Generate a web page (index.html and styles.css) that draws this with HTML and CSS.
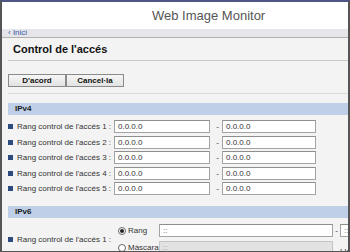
FILE: index.html
```html
<!DOCTYPE html>
<html lang="ca">
<head>
<meta charset="utf-8">
<title>Control de l'accés</title>
<link rel="stylesheet" href="styles.css">
</head>
<body>
<div class="window">
  <header class="top">Web Image Monitor</header>
  <nav class="crumb"><a class="crumb-link" href="#">&lsaquo; Inici</a></nav>
  <main class="content">
    <h1 class="title">Control de l'accés</h1>
    <div class="actions">
      <button class="btn" type="button">D'acord</button>
      <button class="btn" type="button">Cancel·la</button>
    </div>
    <div class="sep"></div>

    <section class="group">
      <h2 class="group-head">IPv4</h2>
      <div class="rows">
        <div class="row"><span class="marker"></span><span class="label">Rang control de l'accés 1 :</span><span class="field f-left">0.0.0.0</span><span class="dash">-</span><span class="field f-right">0.0.0.0</span></div>
        <div class="row"><span class="marker"></span><span class="label">Rang control de l'accés 2 :</span><span class="field f-left">0.0.0.0</span><span class="dash">-</span><span class="field f-right">0.0.0.0</span></div>
        <div class="row"><span class="marker"></span><span class="label">Rang control de l'accés 3 :</span><span class="field f-left">0.0.0.0</span><span class="dash">-</span><span class="field f-right">0.0.0.0</span></div>
        <div class="row"><span class="marker"></span><span class="label">Rang control de l'accés 4 :</span><span class="field f-left">0.0.0.0</span><span class="dash">-</span><span class="field f-right">0.0.0.0</span></div>
        <div class="row"><span class="marker"></span><span class="label">Rang control de l'accés 5 :</span><span class="field f-left">0.0.0.0</span><span class="dash">-</span><span class="field f-right">0.0.0.0</span></div>
      </div>
    </section>

    <section class="group">
      <h2 class="group-head group-head-v6">IPv6</h2>
      <div class="v6row">
        <span class="marker"></span><span class="label">Rang control de l'accés 1 :</span>
        <div class="opts">
          <div class="opt-line">
            <span class="choice"><span class="radio radio-on"></span><span class="choice-text">Rang</span></span>
            <span class="field f-wide">::</span>
            <span class="dash6">-</span>
            <span class="field f-tail">::</span>
          </div>
          <div class="opt-line">
            <span class="choice"><span class="radio"></span><span class="choice-text">Màscara</span></span>
            <span class="field f-wide f-off">::</span>
            <span class="tail-text">Llargada del prefix</span>
          </div>
        </div>
      </div>
    </section>
  </main>
</div>
</body>
</html>
```

FILE: styles.css
```css
* { box-sizing: border-box; }
html, body { margin: 0; padding: 0; background: #fff; }
body { font-family: "Liberation Sans", Arial, sans-serif; }

.window {
  width: 350px;
  height: 252px;
  border-top: 2px solid #4e5686;
  border-left: 2px solid #555;
  border-right: 2px solid #555;
  border-bottom: 1px solid #555;
  overflow: hidden;
  background: #f3f3f3;
  white-space: nowrap;
}

.top {
  height: 27px;
  background: #fff;
  padding-left: 150px;
  font-size: 13px;
  line-height: 27px;
  color: #555;
}

.crumb {
  height: 9px;
  background: #e5e5ea;
  border-bottom: 1px solid #b0b0b0;
  padding-left: 6px;
  font-size: 8px;
  line-height: 8px;
}
.crumb-link { color: #3a5aa8; text-decoration: none; }

.content { padding-left: 6px; width: 460px; }

.title {
  margin: 0;
  height: 23px;
  border-bottom: 1px solid #c8c8c8;
  padding-left: 5px;
  font-size: 11px;
  line-height: 22px;
  font-weight: bold;
  color: #111;
}

.actions { display: flex; margin-top: 13px; height: 13px; }
.btn {
  width: 58px;
  height: 13px;
  margin: 0;
  padding: 0;
  border: 1px solid #8a8a8a;
  background: linear-gradient(#f6f6f6, #e2e2e2);
  font-family: "Liberation Sans", Arial, sans-serif;
  font-size: 8px;
  font-weight: bold;
  line-height: 11px;
  color: #111;
}

.sep { margin-top: 6px; border-top: 1px solid #dcdcdc; }

.group-head {
  margin: 9px 0 0;
  height: 12px;
  background: #bfcfe7;
  padding-left: 7px;
  font-size: 8px;
  line-height: 12px;
  font-weight: bold;
  color: #1a1a1a;
}
.group-head-v6 { margin-top: 9.5px; }

.rows { padding-top: 4px; }
.row { display: flex; align-items: center; height: 15.5px; }

.marker { width: 5px; height: 5px; background: #2e4b80; margin-right: 4px; flex: none; }
.label { width: 97px; font-size: 8px; color: #333; flex: none; }

.field {
  height: 13px;
  border: 1px solid #a3a3a3;
  border-top-color: #8e8e8e;
  background: #fff;
  font-size: 8px;
  line-height: 11px;
  padding-left: 3px;
  color: #333;
  flex: none;
}
.f-left { width: 96px; }
.f-right { width: 94px; }
.dash { width: 12px; text-align: right; padding-right: 3px; font-size: 8px; color: #333; flex: none; }

.v6row { display: flex; align-items: center; padding-top: 4px; }
.opts { display: flex; flex-direction: column; }
.opt-line { display: flex; align-items: center; height: 17px; }
.choice { width: 45px; display: flex; align-items: center; padding-left: 4px; flex: none; }
.radio {
  width: 8px;
  height: 8px;
  border: 1px solid #666;
  border-radius: 50%;
  background: #fff;
  margin-right: 2px;
  display: flex;
  align-items: center;
  justify-content: center;
  flex: none;
}
.radio-on::after { content: ""; width: 4px; height: 4px; border-radius: 50%; background: #222; }
.choice-text { font-size: 8px; color: #333; }
.f-wide { width: 174px; color: #666; }
.f-off { background: #e2e2e2; border-color: #c4c4c4; color: #999; }
.f-tail { width: 120px; color: #666; }
.dash6 { width: 7px; text-align: center; font-size: 8px; color: #333; flex: none; }
.tail-text { margin-left: 7px; font-size: 8px; color: #333; padding-top: 8px; }
```
